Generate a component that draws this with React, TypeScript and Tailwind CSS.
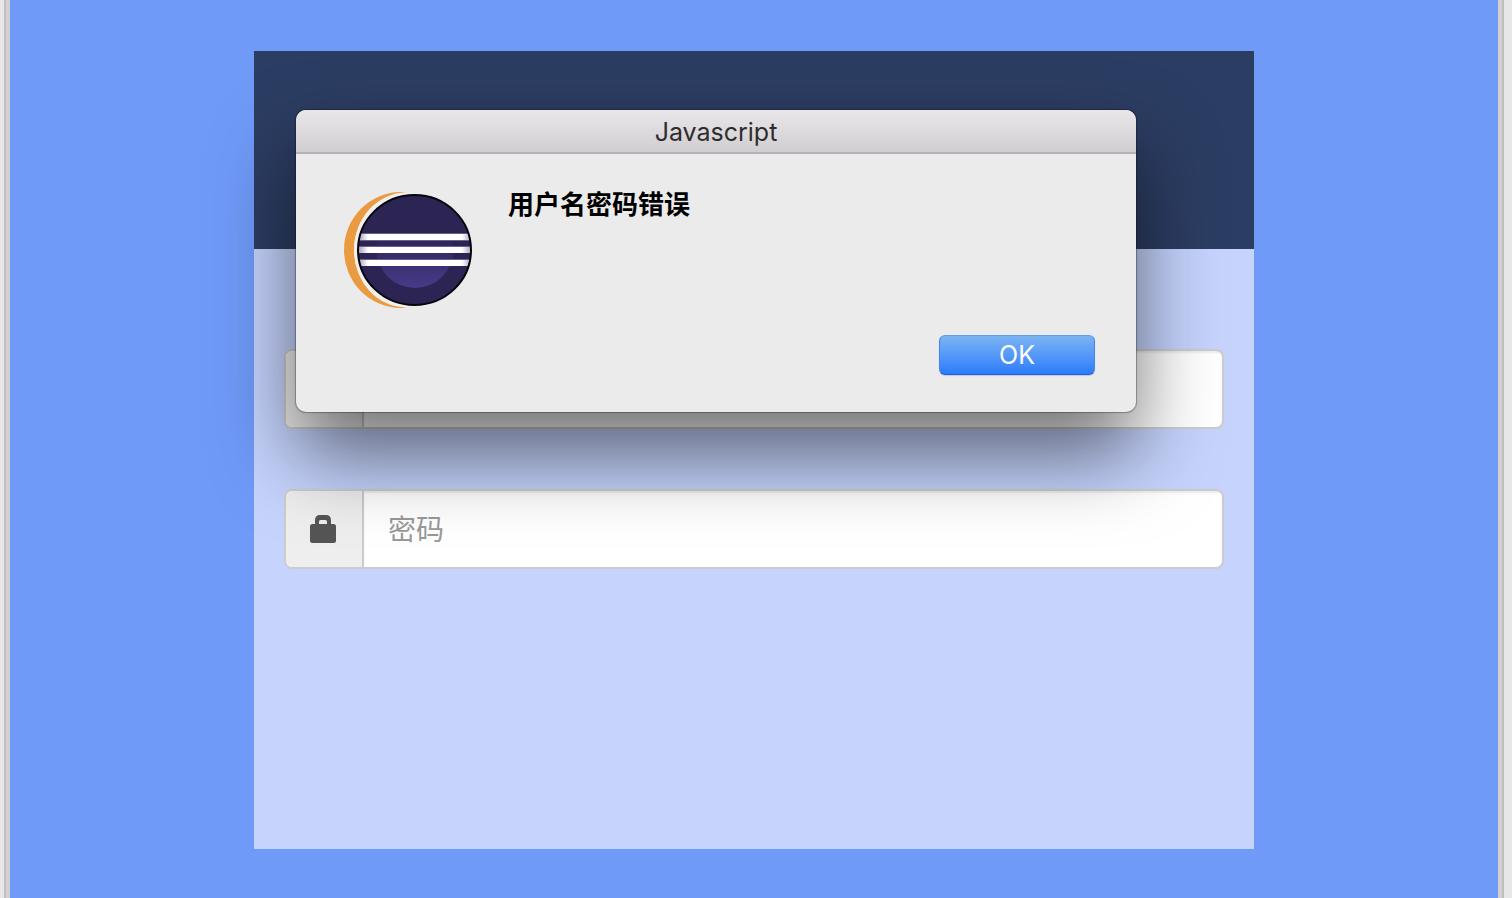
import { useState } from "react";

function EclipseLogo() {
  return (
    <svg className="h-32 w-32" viewBox="0 0 128 128" fill="none" aria-hidden="true">
      <defs>
        <linearGradient id="core" x1="0" y1="26" x2="0" y2="102" gradientUnits="userSpaceOnUse">
          <stop offset="0.3" stopColor="#2c2453" />
          <stop offset="1" stopColor="#483a8a" />
        </linearGradient>
        <linearGradient id="stripe" x1="15" y1="0" x2="127" y2="0" gradientUnits="userSpaceOnUse">
          <stop offset="0" stopColor="#a9a4bc" />
          <stop offset="0.08" stopColor="#fff" />
          <stop offset="0.92" stopColor="#fff" />
          <stop offset="1" stopColor="#a9a4bc" />
        </linearGradient>
        <clipPath id="disc">
          <ellipse cx="70.5" cy="63.5" rx="56" ry="54.5" />
        </clipPath>
      </defs>
      <path d="M62 6.500Q59 6 57 6A57 58 0 0 0 57 122Q59 122 62 121.500A52 57.500 0 0 1 62 6.500Z" fill="#ea9a40" />
      <path d="M64 7A54 57 0 0 0 64 121Z" fill="#f2f0ec" />
      <ellipse cx="70.5" cy="64" rx="56.5" ry="55" fill="#2c2453" />
      <circle cx="71" cy="63.5" r="38.5" fill="url(#core)" />
      <g clipPath="url(#disc)">
        <path d="M14 47h114v1H14zM14 60h114v1H14zM14 73h114v1H14zM14 54h114v1H14z" fill="#67608a" />
        <path d="M14 48h114v6H14zM14 61h114v6H14zM14 74h114v6H14z" fill="url(#stripe)" />
      </g>
      <ellipse cx="70.5" cy="64" rx="56.5" ry="55" stroke="#06050d" strokeWidth="2" />
    </svg>
  );
}

function UserIcon() {
  return (
    <svg className="h-7 w-7" viewBox="0 0 28 28" fill="currentColor" aria-hidden="true">
      <circle cx="14" cy="8" r="6" />
      <path d="M1 26c0-6 5-10 13-10s13 4 13 10z" />
    </svg>
  );
}

function LockIcon() {
  return (
    <svg className="h-7 w-7" viewBox="0 0 28 28" fill="currentColor" aria-hidden="true">
      <path
        fillRule="evenodd"
        d="M6 9V5.500Q6 0 11 0H17Q22 0 22 5.500V9H24.500Q27 9 27 11.500V25.500Q27 28 24.500 28H3.500Q1 28 1 25.500V11.500Q1 9 3.500 9ZM10 9H18V6.500Q18 5 16.500 5H11.500Q10 5 10 6.500Z"
      />
    </svg>
  );
}

type FieldProps = {
  id: string;
  type: string;
  label: string;
  icon: React.ReactNode;
};

function Field({ id, type, label, icon }: FieldProps) {
  return (
    <div className="flex h-20 overflow-hidden rounded-lg border-2 border-[#ccc] bg-white">
      <label
        htmlFor={id}
        aria-label={label}
        className="flex w-[78px] shrink-0 items-center justify-center border-r-2 border-[#ccc] bg-[#eee] pr-0.5 text-[#555]"
      >
        {icon}
      </label>
      <input
        id={id}
        type={type}
        placeholder={label}
        className="min-w-0 flex-1 px-6 pt-0.5 text-[28px] text-[#555] shadow-[inset_0_2px_2px_rgba(0,0,0,0.075)] outline-none placeholder:text-[#999]"
      />
    </div>
  );
}

function AlertDialog({ onClose }: { onClose: () => void }) {
  return (
    <div
      role="alertdialog"
      aria-labelledby="alert-title"
      aria-describedby="alert-text"
      className="absolute left-[42px] top-[59px] w-[840px] overflow-hidden rounded-[10px] bg-[#ebebeb] shadow-[0_0_1px_1px_rgba(0,0,0,0.3),0_42px_80px_rgba(0,0,0,0.55)]"
    >
      <h1
        id="alert-title"
        className="flex h-11 items-center justify-center border-b-2 border-[#b4b2b4] bg-linear-to-b from-[#e9e7e9] to-[#d1ced1] pt-1 text-[25px] text-[#2e2d2e]"
      >
        Javascript
      </h1>
      <div className="flex gap-9 px-12 pt-8">
        <EclipseLogo />
        <p id="alert-text" className="text-[26px] leading-[38px] font-bold text-black">
          用户名密码错误
        </p>
      </div>
      <div className="flex justify-end pt-[21px] pr-[41px] pb-[37px]">
        <button
          type="button"
          onClick={onClose}
          className="h-10 w-[156px] rounded-md border border-t-[#5b9fe8] border-r-[#3f87ee] border-b-[#1d5fe8] border-l-[#3f87ee] bg-linear-to-b from-[#7bb3f3] to-[#2c7bfb] text-[25px] leading-[38px] text-white shadow-[0_1px_1px_rgba(0,0,0,0.15)]"
        >
          OK
        </button>
      </div>
    </div>
  );
}

export default function App() {
  const [open, setOpen] = useState(true);

  return (
    <div className="flex h-screen overflow-hidden bg-[#e7e7e7] pr-2 pl-1 font-[Inter,'Noto_Sans_CJK_SC',sans-serif]">
      <div className="flex flex-1 border-x-2 border-[#bfbfbc] bg-[#d3d0d1] px-1">
        <main className="flex-1 bg-[#6f9af8] pt-[51px]">
          <div className="relative mx-auto w-[1000px] max-w-full">
            <header className="h-[198px] bg-[#2c3d63]" />
            <form className="flex h-[600px] flex-col gap-[60px] bg-[#c5d3fd] px-[30px] pt-[100px]">
              <Field id="username" type="text" label="用户名" icon={<UserIcon />} />
              <Field id="password" type="password" label="密码" icon={<LockIcon />} />
            </form>

            {open && <AlertDialog onClose={() => setOpen(false)} />}
          </div>
        </main>
      </div>
    </div>
  );
}
